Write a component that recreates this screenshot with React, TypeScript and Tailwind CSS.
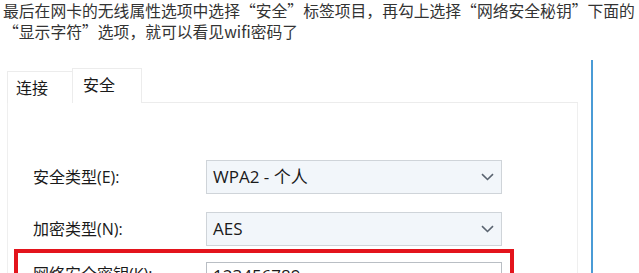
import React from "react";

function Chevron() {
  return (
    <svg width="13" height="8" viewBox="0 0 13 8" fill="none">
      <path d="M1 1.2L6.5 6.5L12 1.2" stroke="#5a6470" strokeWidth="1.6" />
    </svg>
  );
}

function Select({ value }: { value: string }) {
  return (
    <div className="flex h-[34px] w-[296px] items-center justify-between border border-[#cfd4d9] bg-[#f2f6fa] pl-[6px] pr-[7px] text-[17px] text-[#1a1a1a]">
      <span>{value}</span>
      <Chevron />
    </div>
  );
}

export default function App() {
  const dlgFont = { fontFamily: '"Open Sans", "Noto Sans CJK SC", sans-serif' };
  return (
    <div className="h-[273px] w-[639px] overflow-hidden bg-white">
      <p
        className="whitespace-nowrap px-[3px] text-[15.8px] leading-[21px] text-[#333]"
        style={{ fontFamily: '"Noto Sans CJK SC", sans-serif' }}
      >
        最后在网卡的无线属性选项中选择“安全”标签项目，再勾上选择“网络安全秘钥”下面的
        <br />
        “显示字符”选项，就可以看见wifi密码了
      </p>
      <div className="mt-[18px] flex">
        <div className="ml-[7px] mt-[8px] w-[571px]" style={dlgFont}>
          <div className="flex h-[35px] items-end">
            <div className="flex h-[32px] w-[65px] items-center border-l border-t border-[#ececec] pl-[8px] text-[16px] text-[#1a1a1a]">
              连接
            </div>
            <div className="flex h-[35px] w-[70px] items-center border-l border-r border-t border-[#ececec] bg-white pl-[10px] pb-[2px] text-[16px] text-[#1a1a1a]">
              安全
            </div>
            <div className="h-px flex-1 bg-[#ececec]" />
          </div>
          <div className="h-[200px] border-l border-r border-[#efefef] pt-[57px]">
            <div className="flex items-center pl-[25px]">
              <div className="w-[173px] text-[16px] text-[#1a1a1a]">安全类型(E):</div>
              <Select value="WPA2 - 个人" />
            </div>
            <div className="mt-[18px] flex items-center pl-[25px]">
              <div className="w-[173px] text-[16px] text-[#1a1a1a]">加密类型(N):</div>
              <Select value="AES" />
            </div>
            <div className="ml-[6px] mt-[3px] h-[80px] w-[500px] border-4 border-[#e3141c] pl-[15px] pt-[9px]">
              <div className="flex items-start">
                <div className="mt-[1px] w-[173px] text-[16px] leading-[22px] text-[#1a1a1a]">网络安全密钥(K):</div>
                <div className="h-[34px] w-[296px] border border-[#b9bec4] bg-white pl-[6px] pt-[2px] text-[17px] leading-[22px] text-[#1a1a1a]">
                  123456789
                </div>
              </div>
            </div>
          </div>
        </div>
        <div className="ml-[13px] h-[220px] w-[2px] bg-[#4a9bd6]" />
      </div>
    </div>
  );
}
